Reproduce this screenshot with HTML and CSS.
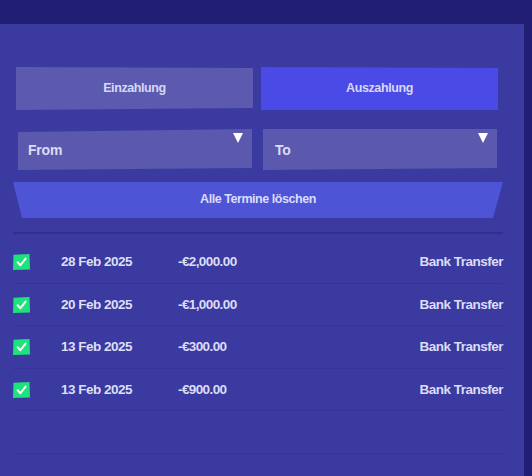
FILE: index.html
```html
<!DOCTYPE html>
<html lang="de">
<head>
<meta charset="utf-8">
<title>Termine</title>
<link rel="stylesheet" href="styles.css">
</head>
<body>
<div class="page">
  <main class="panel">
    <div class="tabs">
      <button class="tab tab-in">Einzahlung</button>
      <button class="tab tab-out">Auszahlung</button>
    </div>
    <div class="selects">
      <div class="select select-from"><span>From</span><i class="caret"></i></div>
      <div class="select select-to"><span>To</span><i class="caret"></i></div>
    </div>
    <button class="clear">Alle Termine löschen</button>
    <ul class="list">
      <li class="row">
        <svg class="check" viewBox="0 0 17 16" width="17" height="16"><polygon points="0.5,0.8 16.5,0 17,15.5 0,16" fill="#1ee27b"/><path d="M4.6 8.2 L7.4 11.2 L12.6 4.6" fill="none" stroke="#fff" stroke-width="2" stroke-linecap="round" stroke-linejoin="round"/></svg>
        <span class="date">28 Feb 2025</span>
        <span class="amount">-€2,000.00</span>
        <span class="method">Bank Transfer</span>
      </li>
      <li class="row">
        <svg class="check" viewBox="0 0 17 16" width="17" height="16"><polygon points="0.5,0.8 16.5,0 17,15.5 0,16" fill="#1ee27b"/><path d="M4.6 8.2 L7.4 11.2 L12.6 4.6" fill="none" stroke="#fff" stroke-width="2" stroke-linecap="round" stroke-linejoin="round"/></svg>
        <span class="date">20 Feb 2025</span>
        <span class="amount">-€1,000.00</span>
        <span class="method">Bank Transfer</span>
      </li>
      <li class="row">
        <svg class="check" viewBox="0 0 17 16" width="17" height="16"><polygon points="0.5,0.8 16.5,0 17,15.5 0,16" fill="#1ee27b"/><path d="M4.6 8.2 L7.4 11.2 L12.6 4.6" fill="none" stroke="#fff" stroke-width="2" stroke-linecap="round" stroke-linejoin="round"/></svg>
        <span class="date">13 Feb 2025</span>
        <span class="amount">-€300.00</span>
        <span class="method">Bank Transfer</span>
      </li>
      <li class="row">
        <svg class="check" viewBox="0 0 17 16" width="17" height="16"><polygon points="0.5,0.8 16.5,0 17,15.5 0,16" fill="#1ee27b"/><path d="M4.6 8.2 L7.4 11.2 L12.6 4.6" fill="none" stroke="#fff" stroke-width="2" stroke-linecap="round" stroke-linejoin="round"/></svg>
        <span class="date">13 Feb 2025</span>
        <span class="amount">-€900.00</span>
        <span class="method">Bank Transfer</span>
      </li>
      <li class="row row-empty"></li>
    </ul>
  </main>
</div>
</body>
</html>
```

FILE: styles.css
```css
* { box-sizing: border-box; }

html, body {
  margin: 0;
  padding: 0;
  height: 100%;
  overflow: hidden;
}

body {
  background: #211f73;
  font-family: "Liberation Sans", Arial, sans-serif;
  font-weight: bold;
  color: #dcdcf6;
}

.page {
  padding-top: 24px;
  display: flex;
}

.panel {
  width: 524px;
  min-height: 452px;
  background: #3a3aa1;
  padding: 43px 21px 0 13px;
}

.tabs {
  display: grid;
  grid-template-columns: 1fr 1fr;
  gap: 8px;
  padding: 0 5px 0 3px;
}

.tab {
  height: 43px;
  border: 0;
  margin: 0;
  padding: 0 0 2px;
  font: inherit;
  font-size: 12.5px;
  letter-spacing: -0.4px;
  color: #d8d8f6;
  cursor: pointer;
}

.tab-in {
  background: #5b5aae;
  clip-path: polygon(0 0, 100% 1px, 100% calc(100% - 2px), 0 100%);
}

.tab-out {
  background: #4a4be7;
  clip-path: polygon(0 0, 100% 1px, 100% 100%, 0 100%);
}

.selects {
  margin-top: 19px;
  display: grid;
  grid-template-columns: 1fr 1fr;
  gap: 11px;
  padding: 0 6px 0 5px;
}

.select {
  height: 41px;
  background: #5a59ad;
  display: flex;
  align-items: center;
  justify-content: space-between;
  padding: 0 9px 0 10px;
  font-size: 14px;
  letter-spacing: -0.2px;
  color: #dcdcf6;
}

.select-from {
  clip-path: polygon(0 3px, 100% 0, 100% calc(100% - 2px), 0 100%);
}

.select-to {
  padding-left: 12px;
  clip-path: polygon(0 0, 100% 0, 100% calc(100% - 2px), 0 100%);
}

.caret {
  align-self: flex-start;
  margin-top: 4px;
  width: 0;
  height: 0;
  border-left: 5.5px solid transparent;
  border-right: 5.5px solid transparent;
  border-top: 10px solid #ffffff;
}

.clear {
  display: block;
  width: 100%;
  margin: 12px 0 0;
  padding: 0 0 2px;
  height: 36px;
  border: 0;
  background: #4d55d6;
  font: inherit;
  font-size: 12.5px;
  letter-spacing: -0.45px;
  color: #dcdcf6;
  clip-path: polygon(0 0, 100% 0, calc(100% - 10px) 100%, 9px 100%);
  cursor: pointer;
}

.list {
  list-style: none;
  margin: 14px 0 0;
  padding: 7px 0 0;
  border-top: 2px solid #30308f;
}

.row {
  height: 42.5px;
  border-bottom: 1px solid #34349a;
  display: grid;
  grid-template-columns: 48px 117px 1fr auto;
  align-items: center;
  font-size: 13.5px;
  letter-spacing: -0.5px;
}

.check { display: block; margin-top: 1px; }

.date { color: #dedef7; }

.amount { color: #dcdcf6; letter-spacing: -0.6px; }

.method {
  text-align: right;
  color: #dcdcf6;
}
```
